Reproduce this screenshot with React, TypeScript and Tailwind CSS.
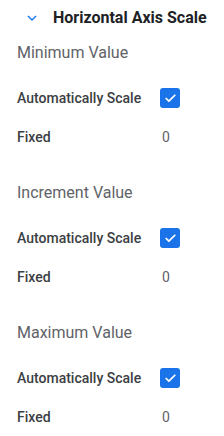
import { Check } from 'lucide-react'

const sections = ['Minimum Value', 'Increment Value', 'Maximum Value']

function Section({ title }: { title: string }) {
  return (
    <div className="pb-[19px]">
      <div className="h-[36px] flex items-center pl-[17px] text-[16px] text-[#5f6368]">{title}</div>
      <div className="mt-[7px] h-[40px] flex items-center pl-[17px]">
        <span className="w-[143px] text-[14px] font-medium text-[#3c4043]">Automatically Scale</span>
        <span className="w-[20px] h-[20px] rounded-[3px] bg-[#1a73e8] flex items-center justify-center">
          <Check size={13} strokeWidth={3.2} className="text-white" />
        </span>
      </div>
      <div className="h-[38px] flex items-center pl-[17px]">
        <span className="w-[145px] text-[14px] font-medium text-[#3c4043]">Fixed</span>
        <span className="text-[14px] text-[#5f6368]">0</span>
      </div>
    </div>
  )
}

export default function App() {
  return (
    <div className="w-[224px] h-[436px] bg-white overflow-hidden" style={{ fontFamily: 'Roboto, "Noto Sans", sans-serif' }}>
      <div className="h-[35px] flex items-center pl-[27px]">
        <svg width="10" height="6" viewBox="0 0 10 6" className="text-[#1a73e8]">
          <path d="M1 1l4 4 4-4" fill="none" stroke="currentColor" strokeWidth="1.4" />
        </svg>
        <span className="ml-[16px] text-[16px] font-bold text-[#202124]">Horizontal Axis Scale</span>
      </div>
      {sections.map((s) => (
        <Section key={s} title={s} />
      ))}
    </div>
  )
}
